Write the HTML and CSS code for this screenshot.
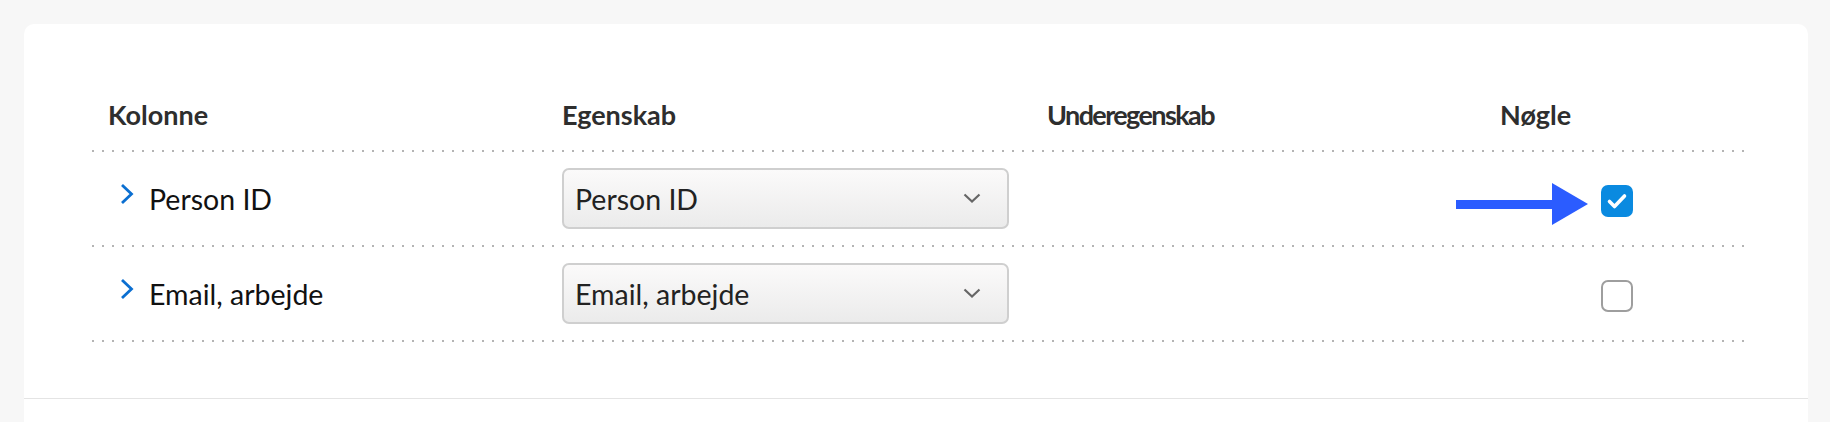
FILE: index.html
```html
<!DOCTYPE html>
<html lang="da">
<head>
<meta charset="utf-8">
<title>Kolonner</title>
<link rel="stylesheet" href="styles.css">
</head>
<body>
<div class="card">
  <div class="table">
    <div class="row head">
      <div class="cell c1">Kolonne</div>
      <div class="cell c2">Egenskab</div>
      <div class="cell c3 narrow">Underegenskab</div>
      <div class="cell c4">Nøgle</div>
    </div>
    <div class="sep"></div>
    <div class="row body">
      <div class="cell c1 name">
        <svg class="chev" width="14" height="22" viewBox="0 0 14 22"><path d="M2 2 L11.5 11 L2 20" fill="none" stroke="#0b6fd1" stroke-width="2.8"/></svg>
        <span>Person ID</span>
      </div>
      <div class="cell c2">
        <div class="select"><span>Person ID</span>
          <svg class="dd" width="18" height="11" viewBox="0 0 18 11"><path d="M1.5 1.5 L9 8.5 L16.5 1.5" fill="none" stroke="#666" stroke-width="2.2"/></svg>
        </div>
      </div>
      <div class="cell c3"></div>
      <div class="cell c4 keycell">
        <div class="cbwrap">
          <svg class="arrow" width="132" height="42" viewBox="0 0 132 42"><rect x="0" y="17" width="97" height="9" fill="#2b5cff"/><polygon points="96,0 132,21 96,42" fill="#2b5cff"/></svg>
          <div class="cb checked">
            <svg width="32" height="32" viewBox="0 0 32 32"><path d="M8.5 16.5 L13.5 21.5 L23.5 11" fill="none" stroke="#fff" stroke-width="3.6" stroke-linecap="round" stroke-linejoin="round"/></svg>
          </div>
        </div>
      </div>
    </div>
    <div class="sep"></div>
    <div class="row body">
      <div class="cell c1 name">
        <svg class="chev" width="14" height="22" viewBox="0 0 14 22"><path d="M2 2 L11.5 11 L2 20" fill="none" stroke="#0b6fd1" stroke-width="2.8"/></svg>
        <span>Email, arbejde</span>
      </div>
      <div class="cell c2">
        <div class="select"><span>Email, arbejde</span>
          <svg class="dd" width="18" height="11" viewBox="0 0 18 11"><path d="M1.5 1.5 L9 8.5 L16.5 1.5" fill="none" stroke="#666" stroke-width="2.2"/></svg>
        </div>
      </div>
      <div class="cell c3"></div>
      <div class="cell c4 keycell">
        <div class="cbwrap"><div class="cb"></div></div>
      </div>
    </div>
    <div class="sep"></div>
  </div>
  <div class="footer"></div>
</div>
</body>
</html>
```
FILE: styles.css
```css
html, body {
  margin: 0;
  padding: 0;
  background: #f7f7f7;
  height: 100%;
  overflow: hidden;
}
body {
  padding: 24px 22px 0 24px;
  box-sizing: border-box;
  font-family: Lato, "Noto Sans", sans-serif;
}
.card {
  background: #fff;
  border-radius: 10px 10px 0 0;
  padding: 75px 64px 0 68px;
  height: 100%;
  box-sizing: border-box;
}
.table {
  display: flex;
  flex-direction: column;
}
.row {
  display: grid;
  grid-template-columns: 454px 485px 453px 1fr;
  align-items: center;
}
.head {
  padding-bottom: 19px;
  font-weight: 700;
  font-size: 27px;
  line-height: 32px;
  color: #2e2e2e;
}
.narrow {
  letter-spacing: -1.6px;
}
.cell {
  padding-left: 16px;
}
.sep {
  height: 2px;
  background-image: repeating-linear-gradient(to right, #b4b4b4 0 2px, transparent 2px 10px);
}
.body {
  height: 93px;
  font-size: 28.5px;
  color: #111;
}
.name {
  display: flex;
  align-items: center;
  padding-left: 28px;
  gap: 15px;
}
.chev {
  margin-top: -9px;
}
.select {
  width: 447px;
  height: 61px;
  box-sizing: border-box;
  border: 2px solid #cfcfcf;
  border-radius: 7px;
  background: linear-gradient(#fbfafa, #ebebeb);
  display: flex;
  align-items: center;
  justify-content: space-between;
  padding: 0 26px 0 11px;
  color: #222;
  font-size: 28.5px;
}
.keycell {
  padding-left: 117px;
}
.cbwrap {
  position: relative;
  width: 32px;
  height: 32px;
  margin-top: 5px;
}
.cb {
  width: 32px;
  height: 32px;
  box-sizing: border-box;
  border: 2.5px solid #9e9e9e;
  border-radius: 7px;
  background: #fff;
}
.cb.checked {
  border: none;
  background: #0a8ae0;
}
.cb.checked svg {
  display: block;
}
.arrow {
  position: absolute;
  right: calc(100% + 13px);
  top: -2px;
}
.footer {
  margin: 56px -64px 0 -68px;
  border-top: 1px solid #e4e4e4;
}
```
